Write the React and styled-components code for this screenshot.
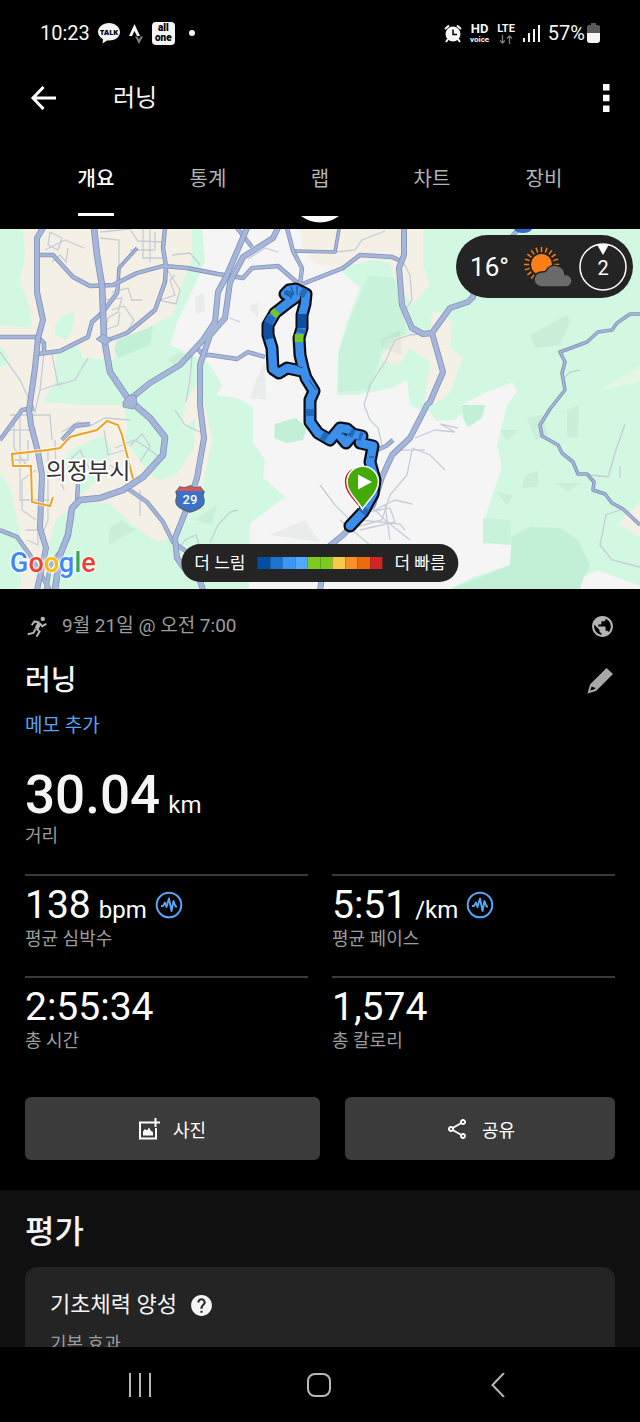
import React from "react";
import styled, { createGlobalStyle } from "styled-components";
import { MdHelp, MdOutlineShare, MdPublic } from "react-icons/md";

const GlobalStyle = createGlobalStyle`
  * {
    box-sizing: border-box;
  }

  body {
    margin: 0;
    background: #000000;
  }

  button {
    padding: 0;
    border: 0;
    background: none;
    color: inherit;
    font: inherit;
    cursor: pointer;
  }

  svg {
    display: block;
  }
`;

const Screen = styled.div`
  display: flex;
  flex-direction: column;
  height: 100vh;
  background: #000000;
  color: #f5f5f5;
  font-family: Roboto, "Noto Sans CJK KR", sans-serif;
  font-size: 18px;
`;

const StatusBar = styled.div`
  display: flex;
  flex: none;
  align-items: center;
  justify-content: space-between;
  height: 66px;
  padding: 0 40px;
  font-size: 20px;
`;

const StatusGroup = styled.div`
  display: flex;
  align-items: center;
  gap: 8px;
`;

const TightGroup = styled(StatusGroup)`
  gap: 2px;
`;

const Dot = styled.span`
  width: 6px;
  height: 6px;
  margin-left: 6px;
  border-radius: 50%;
  background: #f5f5f5;
`;

const AllOneBadge = styled.span`
  display: flex;
  flex-direction: column;
  align-items: center;
  justify-content: center;
  width: 23px;
  height: 23px;
  border-radius: 4px;
  background: #f5f5f5;
  color: #000000;
  font-family: Roboto, sans-serif;
  font-size: 10px;
  font-weight: 900;
  line-height: 10px;
`;

const CarrierTag = styled.span`
  display: flex;
  flex-direction: column;
  align-items: center;
  font-family: Roboto, sans-serif;
  font-size: ${({ $size }) => $size}px;
  font-weight: 700;
  line-height: 12px;

  small {
    font-size: 8px;
    line-height: 9px;
  }
`;

const AppBar = styled.header`
  display: flex;
  flex: none;
  align-items: center;
  height: 64px;
  padding: 0 30px;
`;

const AppTitle = styled.h1`
  flex: 1;
  margin: 0 0 0 56px;
  font-size: 24px;
  font-weight: 400;
  line-height: 32px;
`;

const TabList = styled.div`
  display: grid;
  flex: none;
  grid-template-columns: repeat(5, 1fr);
  height: 86px;
  padding: 0 40px;
`;

const Tab = styled.button`
  display: flex;
  align-items: flex-end;
  justify-content: center;
  color: ${({ $active }) => ($active ? "#ffffff" : "#b4b4b4")};
  font-size: 20px;
  font-weight: ${({ $active }) => ($active ? 500 : 400)};
  line-height: 28px;

  span {
    padding-bottom: 20px;
    border-bottom: 3px solid
      ${({ $active }) => ($active ? "#ffffff" : "transparent")};
  }
`;

const Content = styled.main`
  flex: 1;
  min-height: 0;
  overflow: hidden auto;
  scrollbar-width: none;
`;

const RefreshStrip = styled.div`
  display: flex;
  justify-content: center;
  height: 13px;
`;

const MapPanel = styled.section`
  position: relative;
  height: 360px;
  overflow: hidden;
  background: #d3f8e2;
`;

const MapSvg = styled.svg`
  width: 100%;
  height: 100%;
`;

const WeatherPill = styled.div`
  position: absolute;
  top: 6px;
  right: 7px;
  display: flex;
  align-items: center;
  gap: 6px;
  height: 63px;
  padding: 0 6px 0 14px;
  border-radius: 32px;
  background: #242424;
  color: #ffffff;
`;

const Temperature = styled.span`
  margin-right: 8px;
  font-size: 26px;
`;

const Legend = styled.div`
  position: absolute;
  bottom: 7px;
  left: 50%;
  display: flex;
  align-items: center;
  gap: 12px;
  height: 38px;
  padding: 0 13px;
  border-radius: 19px;
  background: #242424;
  color: #ffffff;
  font-size: 17px;
  line-height: 24px;
  white-space: nowrap;
  transform: translateX(-50%);
`;

const LegendScale = styled.div`
  display: grid;
  grid-template-columns: repeat(10, 1fr);
  width: 125px;
  height: 12px;
`;

const LegendCell = styled.span`
  background: ${({ $color }) => $color};
`;

const GoogleMark = styled.div`
  position: absolute;
  bottom: 10px;
  left: 10px;
  font-size: 27px;
  font-weight: 500;
  line-height: 32px;
  filter: drop-shadow(0 0 1px #ffffff) drop-shadow(0 0 1px #ffffff);
`;

const Letter = styled.span`
  color: ${({ $color }) => $color};
`;

const Details = styled.section`
  padding: 22px 25px 30px;
`;

const Row = styled.div`
  display: flex;
  align-items: center;
  justify-content: space-between;
`;

const ActivityDate = styled.div`
  display: flex;
  align-items: center;
  gap: 14px;
  color: #9c9c9c;
  font-size: 19px;
  line-height: 30px;
`;

const TitleRow = styled(Row)`
  margin-top: 20px;
`;

const ActivityName = styled.h2`
  margin: 0;
  font-size: 28px;
  font-weight: 500;
  line-height: 40px;
`;

const AddNote = styled.a`
  display: block;
  width: fit-content;
  margin-top: 12px;
  color: #57a5f5;
  font-size: 19px;
  line-height: 26px;
  text-decoration: none;
`;

const Distance = styled.div`
  margin-top: 26px;
  font-size: 53px;
  font-weight: 500;
  line-height: 60px;
`;

const Unit = styled.span`
  margin-left: 8px;
  font-size: 24px;
  font-weight: 400;
  line-height: 24px;
`;

const Label = styled.div`
  color: #9c9c9c;
  font-size: 18px;
  line-height: 22px;
`;

const StatGrid = styled.div`
  display: grid;
  grid-template-columns: 1fr 1fr;
  gap: 26px 24px;
  margin-top: 27px;
`;

const Stat = styled.div`
  padding-top: 6px;
  border-top: 2px solid #3a3a3a;
`;

const StatValue = styled.div`
  display: flex;
  align-items: center;
  gap: 8px;
  color: #ffffff;
  font-size: 39px;
  line-height: 46px;
`;

const Actions = styled.div`
  display: grid;
  grid-template-columns: 295fr 270fr;
  gap: 25px;
  margin-top: 45px;
`;

const ActionButton = styled.button`
  display: flex;
  align-items: center;
  justify-content: center;
  gap: 13px;
  height: 63px;
  border-radius: 6px;
  background: #3b3b3b;
  color: #ffffff;
  font-size: 18px;
`;

const Evaluation = styled.section`
  padding: 20px 25px 24px;
  background: #101010;
`;

const SectionTitle = styled.h2`
  margin: 0;
  font-size: 32px;
  font-weight: 500;
  line-height: 44px;
`;

const Card = styled.div`
  margin-top: 13px;
  padding: 24px 25px;
  border-radius: 12px;
  background: #242424;
`;

const CardTitle = styled.h3`
  display: flex;
  align-items: center;
  gap: 12px;
  margin: 0 0 14px;
  font-size: 22px;
  font-weight: 400;
  line-height: 28px;
`;

const NavBar = styled.nav`
  display: flex;
  flex: none;
  align-items: center;
  justify-content: space-around;
  height: 75px;
  padding: 0 52px 0 50px;
  color: #b8b8b8;
`;

const NavButton = styled.button`
  display: flex;
  align-items: center;
  justify-content: center;
  width: 48px;
  height: 48px;
`;

const tabs = ["개요", "통계", "랩", "차트", "장비"];

const legendColors = [
  "#034ea1",
  "#1b75d0",
  "#3b96f5",
  "#52a9ff",
  "#7ecb20",
  "#7ecb20",
  "#f8ca4a",
  "#fb8f2a",
  "#ed6a10",
  "#d32325",
];

const googleLetters = [
  ["G", "#4285f4"],
  ["o", "#ea4335"],
  ["o", "#fbbc05"],
  ["g", "#4285f4"],
  ["l", "#34a853"],
  ["e", "#ea4335"],
];

const stats = [
  { value: "138", unit: "bpm", label: "평균 심박수", graph: true },
  { value: "5:51", unit: "/km", label: "평균 페이스", graph: true },
  { value: "2:55:34", label: "총 시간" },
  { value: "1,574", label: "총 칼로리" },
];

// Map areas, back to front
const areas = [
  ["#f5f0e5", "23,229 25,255 20,280 30,308 32,328 0,325 0,472 10,488 20,532 23,552 20,589 43,589 50,540 56,520 78,502 110,504 133,525 157,542 173,538 200,500 212,440 200,380 186,400 180,450 160,480 150,475 125,440 132,405 83,405 43,402 55,382 57,350 78,345 83,358 113,360 117,352 152,325 173,315 182,285 192,258 192,229"],
  ["#d3f8e2", "63,315 75,312 73,328 67,340 55,335 55,326"],
  ["#d3f8e2", "70,450 104,435 112,450 105,475 80,495 76,480 62,468"],
  ["#d3f8e2", "124,405 186,405 168,432 150,450 128,433"],
  ["#d3f8e2", "152,472 168,440 196,418 194,448 176,475 160,480"],
  ["#d3f8e2", "0,345 8,355 6,365 0,368"],
  ["#c2f0d6", "117,340 153,326 150,345 118,358 114,350"],
  ["#f5f5f5", "202,229 205,260 195,285 178,320 170,345 195,356 208,362 222,385 217,395 237,398 253,407 253,442 265,460 263,477 285,497 250,523 249,589 450,589 473,577 510,565 512,545 483,543 485,518 502,467 497,445 507,405 517,392 513,382 487,392 457,407 425,412 410,405 407,380 392,388 357,395 337,395 338,352 347,322 360,288 342,272 343,229"],
  ["#f5f0e5", "300,229 423,229 423,265 430,285 412,305 393,275 390,262 370,260 343,268 314,264 302,248"],
  ["#f5f0e5", "380,358 397,335 430,332 432,313 446,311 452,328 450,348 463,358 450,392 436,404 425,400 430,362 410,348 398,366"],
  ["#c8f3da", "368,275 393,278 405,310 405,335 385,340 370,390 338,392 339,352 350,320"],
  ["#d3f8e2", "430,412 438,405 470,406 455,420 436,421"],
  ["#c2f0d6", "462,405 485,405 482,418 468,427 463,418"],
  ["#c2f0d6", "275,424 295,418 307,427 303,440 287,443 274,438"],
  ["#c2f0d6", "450,589 510,565 512,536 530,527 560,528 578,540 590,565 580,589"],
  ["#c8f3da", "483,518 510,520 512,545 483,543"],
  ["#f5f5f5", "580,589 584,577 597,570 640,586 640,589"],
  ["#f5f0e5", "618,524 640,502 640,537"],
  ["#e3f7e2", "622,377 640,366 640,382 600,390"],
];

const shades = [
  "530,335 567,315 570,322 560,345 535,348",
  "500,430 518,430 507,441",
  "527,418 543,415 548,435 535,440",
  "567,410 579,405 578,438 567,437",
  "525,475 538,471 538,487 522,488",
  "497,492 513,495 507,505",
  "556,483 580,483 568,492",
  "110,528 122,520 135,530 108,545",
  "195,520 217,505 212,525",
  "168,360 180,352 185,358 176,366",
  "250,305 258,303 258,317 250,310",
  "270,535 305,520 320,542",
  "257,378 265,360 266,400 250,398",
  "380,340 400,330 402,355 382,348",
  "195,298 204,292 205,310 196,315",
];

const minorStreets = [
  "50,232 62,238 58,250 48,245 50,232",
  "45,250 65,240 84,248",
  "52,262 60,255 66,262 68,248",
  "100,232 130,229 138,241 165,242",
  "119,268 119,240 100,238",
  "143,229 143,258 163,258",
  "130,250 155,250 155,232",
  "150,229 150,262",
  "105,300 122,298 118,312 108,318 105,330 118,325 120,312",
  "112,292 128,288 132,300 142,300",
  "112,310 124,306 134,320 128,330",
  "160,300 175,295 170,280 175,275",
  "165,266 180,290 176,304 158,300",
  "172,255 190,253 200,265",
  "44,352 40,390 35,412 20,380 0,352",
  "52,354 58,385 75,380 88,358",
  "40,390 62,383",
  "192,355 190,380 186,402",
  "10,415 50,415 52,440",
  "14,422 14,448 30,470",
  "20,410 20,500 50,500",
  "10,430 36,430",
  "28,440 28,460 10,460",
  "36,470 22,480 22,510 36,520",
  "48,450 48,520 40,540",
  "26,530 38,530 38,545 27,540",
  "55,440 56,470 64,490",
  "60,470 80,450 90,470 80,478",
  "62,432 78,422 92,425 105,418 130,420",
  "104,430 108,455 125,450",
  "115,448 135,440 150,450 160,458",
  "130,446 142,434 150,446 140,462",
  "110,465 130,480",
  "175,410 185,425 200,432",
  "177,552 185,540 196,535 200,548",
  "140,490 140,516",
  "248,259 265,248 278,252",
  "335,252 355,250 362,240 385,231",
  "430,333 410,335 395,340 385,362 370,385 364,405",
  "364,405 370,420 378,428 382,445",
  "403,262 410,275 412,300 405,310",
  "412,450 407,475 390,495 382,520 352,528",
  "412,448 430,455 445,470",
  "400,450 425,450",
  "415,438 435,430 455,432 440,424 458,428",
  "360,495 385,520 410,540",
  "360,520 400,524 405,530",
  "320,485 335,505 350,520",
  "375,510 395,500 412,504",
  "385,505 390,540",
  "352,515 390,508 395,522 360,530",
  "340,520 370,545",
  "210,542 218,525 230,512 238,510",
  "230,318 240,322",
  "623,509 606,515 600,545 612,560 640,567",
  "590,475 608,477 616,450 625,424",
  "562,380 570,372 580,370",
  "620,478 620,466",
];

const mainRoads = [
  "43,228 37,238 37,292 43,320 38,338 35,368 29,410 31,425 38,452 42,475 40,528 46,548 41,572 37,590",
  "129,400 150,383 180,365 203,340 215,322 218,292 227,275 247,228",
  "203,590 198,575 187,572 177,558 175,538 187,508 197,478 204,438 200,405 200,365 210,335 225,318 230,282 243,257 273,238 278,228",
  "404,228 404,255 399,268 402,305 412,328 423,334 432,333 443,372 430,402 427,405 410,438 392,455 382,477 373,505 343,535 327,548 320,590",
  "432,333 450,308 468,302 473,297 475,285",
];

const sideRoads = [
  "38,255 53,255 73,277 90,286 113,285 137,273 163,266 187,268 218,274 243,278 252,268 278,266 300,285 343,268 360,255 392,257 403,262",
  "165,228 163,248 166,266 165,282 155,310 137,325 127,333 108,340",
  "0,337 38,337 44,343 44,354",
  "38,354 60,351 88,337 92,322 103,312 117,293 118,285",
  "127,488 147,502 163,522 173,542 187,552",
  "0,440 22,410 34,408",
  "0,530 17,537 30,555 50,590",
  "60,552 50,566 46,590",
  "198,349 203,355 210,355 237,359 248,352 265,357",
  "287,228 293,251 302,268 300,284",
  "237,228 252,247",
  "62,440 75,426 90,424",
  "78,484 77,500",
  "377,450 386,446 393,440",
  "510,238 520,228",
];

const slimRoads = [
  "118,285 119,268 137,248",
  "293,251 335,252 339,229",
  "640,314 630,314 617,323 612,330 598,332 587,342 560,352 565,362 562,373 565,390 550,409 540,425 542,436 558,445 562,453 573,462 578,474 587,474 594,482 593,490 605,494 612,503 623,509 640,525",
];

const expressway =
  "94,228 97,255 102,285 104,338 110,372 129,400 150,418 165,437 163,455 143,477 123,490 100,498 80,500 72,508 68,535 60,555 55,590";

const cityBoundary =
  "133,479 122,435 118,425 107,421 97,430 70,437 60,448 48,450 12,454 13,466 31,466 32,502 50,506 53,497";

const track =
  "M288 296 L285 294 L289 290 L296 289 L306 294 L305 304 L302 315 L302 328 L299 338 L300 355 L303 368 L306 378 L314 391 L310 400 L310 422 L318 433 L330 440 L336 433 L340 428 L347 429 L353 434 L362 436 L360 443 L373 446 L370 462 L375 480 L373 494 L363 512 L350 526 M296 297 L289 302 L275 313 L268 325 L268 335 L272 348 L273 369 L279 373 L287 368 L301 371 M341 437 L346 443 L352 436";

const Roads = ({ lines, outer, inner }) => (
  <g fill="none" strokeLinejoin="round">
    {lines.map((points) => (
      <polyline
        key={points}
        points={points}
        stroke="#8292bc"
        strokeWidth={outer}
      />
    ))}
    {lines.map((points) => (
      <polyline
        key={points}
        points={points}
        stroke="#a6b6d8"
        strokeWidth={inner}
      />
    ))}
  </g>
);

const RouteMap = () => (
  <MapSvg
    viewBox="0 229 640 360"
    preserveAspectRatio="xMidYMid slice"
    role="img"
    aria-label="러닝 경로"
  >
    {areas.map(([fill, points]) => (
      <polygon key={points} points={points} fill={fill} />
    ))}
    {shades.map((points) => (
      <polygon key={points} points={points} fill="#50826a" opacity="0.07" />
    ))}
    <g fill="none" stroke="#c6cdd8" strokeWidth="1.3">
      {minorStreets.map((points) => (
        <polyline key={points} points={points} />
      ))}
    </g>
    <Roads lines={slimRoads} outer={3.6} inner={1.8} />
    <Roads lines={sideRoads} outer={4.4} inner={2.8} />
    <Roads lines={mainRoads} outer={6} inner={4.4} />
    <Roads lines={[expressway]} outer={6.6} inner={5} />
    <path
      d="M123 402 L129 395 L136 396 L137 404 L133 409 L123 407 Z M96 339 L103 334 L112 340 L105 345 Z"
      fill="#a6b6d8"
      stroke="#8292bc"
      strokeWidth="0.8"
    />
    <polyline
      points={cityBoundary}
      fill="none"
      stroke="#ffffff"
      strokeWidth="4"
      opacity="0.7"
    />
    <polyline
      points={cityBoundary}
      fill="none"
      stroke="#eda322"
      strokeWidth="2"
    />
    <path d="M514 229 h18 q-2 4 -9 4 q-7 0 -9 -4z" fill="#2f6bc6" />

    <path
      d="M180 487 q5 2 10 -1 q5 3 10 1 l4 5 q-2 3 0 8 q1 8 -14 12 q-15 -4 -14 -12 q2 -5 0 -8z"
      fill="#3a72c8"
      stroke="#5d6474"
      strokeWidth="1.5"
    />
    <path
      d="M180 487 q5 2 10 -1 q5 3 10 1 l3 4 h-26z"
      fill="#d8565b"
    />
    <text
      x="190"
      y="504"
      fill="#ffffff"
      fontSize="13"
      fontWeight="500"
      textAnchor="middle"
    >
      29
    </text>
    <text
      x="88"
      y="479"
      fill="#333338"
      fontSize="23"
      fontWeight="400"
      stroke="#ffffff"
      strokeWidth="4"
      strokeLinejoin="round"
      paintOrder="stroke"
      textAnchor="middle"
    >
      의정부시
    </text>

    <g fill="none" strokeLinecap="round" strokeLinejoin="round">
      <path d={track} stroke="#0a0d14" strokeWidth="13" />
      <path d={track} stroke="#3b8fea" strokeWidth="8.5" />
    </g>
    <g fill="none" strokeWidth="8.5">
      <path
        d="M302 314 L302 328 M268 322 L268 335 L269 339"
        stroke="#104f9f"
      />
      <path
        d="M288 296 L290 291 M301 291 L306 294 M272 316 L268 323 M302 329 L301 333 M310 409 L310 416 M322 435 L327 438 M350 432 L354 434 M359 436 L362 437 M366 508 L362 513"
        stroke="#2069bd"
      />
      <path d="M299 334 V342 M277 311 L273 315" stroke="#7ac721" />
    </g>
    <path
      d="M284 291 L292 299 M291 287 L294 295 M297 286 L297 295 M309 380 L316 390 M303 368 L297 366 M369 457 H374 M341 434 L350 434"
      fill="none"
      stroke="#174c86"
      strokeWidth="1"
    />

    <path
      d="M359 508 C352 499 344 492 344 482 A15.5 15.5 0 0 1 352 468"
      fill="#d9142f"
      stroke="#ffffff"
      strokeWidth="1.5"
    />
    <path
      d="M362.500 509 C357 500 347 492 347 482 A15.500 15.500 0 0 1 378.500 482 C378.500 492 368 500 362.500 509 Z"
      fill="#44ab05"
      stroke="#ffffff"
      strokeWidth="1.5"
    />
    <path d="M358 474.500 V489.500 L372 482 Z" fill="#ffffff" />
  </MapSvg>
);

const WeatherIcon = () => {
  const rays = Array.from({ length: 20 }, (_, i) => i * 18);
  return (
    <svg width="50" height="42" viewBox="0 0 50 42">
      <g stroke="#fb7f14" strokeWidth="1.5">
        {rays.map((angle) => (
          <line
            key={angle}
            x1="18.500"
            y1="1"
            x2="18.500"
            y2="6"
            transform={`rotate(${angle} 18.5 18.5)`}
          />
        ))}
      </g>
      <circle cx="18.500" cy="18.500" r="10.500" fill="#fb7f14" />
      <path
        d="M19 41 a7.500 7.500 0 0 1 -1 -15 q4 0 5 -1 a10 10 0 0 1 19 3.500 a6.200 6.200 0 0 1 1.500 12.500 z"
        fill="#6a6a6a"
        stroke="#242424"
        strokeWidth="1.500"
      />
    </svg>
  );
};

const WindIcon = () => (
  <svg width="48" height="48" viewBox="0 0 48 48">
    <circle
      cx="24"
      cy="24"
      r="23"
      fill="none"
      stroke="#ffffff"
      strokeWidth="1.500"
    />
    <path d="M18 1.500 h12 l-6 10.500 z" fill="#ffffff" />
    <text x="24" y="32" fill="#ffffff" fontSize="20" textAnchor="middle">
      2
    </text>
  </svg>
);

const TalkIcon = () => (
  <svg width="22" height="21" viewBox="0 0 22 21">
    <path
      d="M11 0 C17 0 22 4 22 9 C22 14 17 17.500 11 17.500 L9 17.400 L4.500 20.500 L5 16.200 C2 14.500 0 12 0 9 C0 4 5 0 11 0 Z"
      fill="#f5f5f5"
    />
    <text
      x="11"
      y="11.500"
      fill="#000000"
      fontFamily="Open Sans, sans-serif"
      fontSize="7"
      fontWeight="800"
      textAnchor="middle"
    >
      TALK
    </text>
  </svg>
);

const StravaIcon = () => (
  <svg width="16" height="21" viewBox="0 0 16 21">
    <path d="M1 13 L6.500 1 L12 13 H9 L6.500 8 L4 13 Z" fill="#f5f5f5" />
    <path d="M7 13.500 H9.500 L11 16.500 L12.500 13.500 H15 L11 21 Z" fill="#7c7c7c" />
  </svg>
);

const AlarmIcon = () => (
  <svg width="18" height="19" viewBox="0 0 18 19">
    <circle cx="9" cy="10" r="7.500" fill="#f5f5f5" />
    <path
      d="M1 5 L5 1.500 M17 5 L13 1.500 M4 15 L2 18 M14 15 L16 18"
      stroke="#f5f5f5"
      strokeWidth="2"
    />
    <path d="M9 5.500 V10.500 H13" fill="none" stroke="#000000" strokeWidth="1.500" />
  </svg>
);

const DataArrows = () => (
  <svg width="14" height="9" viewBox="0 0 14 9">
    <path
      d="M3.500 0 V8 M1 5.500 L3.500 8 L6 5.500 M10.500 9 V1 M8 3.500 L10.500 1 L13 3.500"
      fill="none"
      stroke="#7c7c7c"
      strokeWidth="1.300"
    />
  </svg>
);

const SignalIcon = () => (
  <svg width="17" height="18" viewBox="0 0 17 18">
    <path
      d="M1 14 V18 M6 9 V18 M11 5 V18 M16 1 V18"
      stroke="#f5f5f5"
      strokeWidth="2"
    />
  </svg>
);

const BatteryIcon = () => (
  <svg width="13" height="20" viewBox="0 0 13 20">
    <path d="M4 0 H9 V2 H11 Q13 2 13 4 V10 H0 V4 Q0 2 2 2 H4 Z" fill="#5a5a5a" />
    <path d="M0 10 H13 V17 Q13 20 10 20 H3 Q0 20 0 17 Z" fill="#f5f5f5" />
  </svg>
);

const BackIcon = () => (
  <svg width="27" height="24" viewBox="0 0 27 24">
    <path
      d="M13.500 1 L3 12 L13.500 23 M3 12 H26"
      fill="none"
      stroke="#ffffff"
      strokeWidth="3"
    />
  </svg>
);

const MoreIcon = () => (
  <svg width="7" height="28" viewBox="0 0 7 28">
    <path d="M0 0 h6.500 v6.500 h-6.500z M0 10.700 h6.500 v6.500 h-6.500z M0 21.500 h6.500 v6.500 h-6.500z" fill="#ffffff" />
  </svg>
);

const RunnerIcon = () => (
  <svg width="23" height="21" viewBox="78 76 68 62">
    <circle cx="130.500" cy="84.500" r="6.500" fill="#b4b4b4" />
    <g fill="none" stroke="#b4b4b4">
      <path d="M121 96 L112 114" strokeWidth="12" />
      <path
        d="M121 95 L106 92 L98 103 M122 99 L129 106 L141 99 M109 114 L103 126 L86 130 M113 114 L121 122 L112 137"
        strokeWidth="6"
      />
    </g>
  </svg>
);

const PencilIcon = () => (
  <svg width="28" height="26" viewBox="0 0 28 26">
    <path
      fillRule="evenodd"
      d="M19.500 0 L26 6 L9 23 L0.500 25.500 L3 16.500 Z M4.600 18.500 L3.300 22.500 L7.500 21.300 L8.500 20 Z"
      fill="#a8a8a8"
    />
  </svg>
);

const GraphIcon = () => (
  <svg width="28" height="28" viewBox="0 0 28 28">
    <g fill="none" stroke="#57a5f5">
      <circle cx="14" cy="14" r="12.300" strokeWidth="2" />
      <path
        d="M6 15 H8 L10 11.500 L11.500 16 L14 7.500 L16.500 20 L18.500 10 L20.500 15.500 H22"
        strokeWidth="1.900"
        strokeLinejoin="round"
      />
    </g>
  </svg>
);

const AddPhotoIcon = () => (
  <svg width="21" height="22" viewBox="0 0 21 22">
    <path
      d="M12 4.500 H1 V20.500 H17 V10"
      fill="none"
      stroke="#ffffff"
      strokeWidth="2"
    />
    <path d="M16.500 0 V9 M12 4.500 H21" stroke="#ffffff" strokeWidth="2" />
    <path d="M4 17.500 V13.500 L6 11 L8 12.500 L10 9.500 L12 13 L14 14 V17.500 Z" fill="#ffffff" />
  </svg>
);

const App = () => {
  return (
    <>
      <GlobalStyle />
      <Screen>
        <StatusBar>
          <StatusGroup>
            <span>10:23</span>
            <TalkIcon />
            <StravaIcon />
            <AllOneBadge>
              <span>all</span>
              <span>one</span>
            </AllOneBadge>
            <Dot />
          </StatusGroup>
          <StatusGroup>
            <AlarmIcon />
            <CarrierTag $size={13}>
              HD
              <small>voice</small>
            </CarrierTag>
            <CarrierTag $size={11}>
              LTE
              <DataArrows />
            </CarrierTag>
            <SignalIcon />
            <TightGroup>
              <span>57%</span>
              <BatteryIcon />
            </TightGroup>
          </StatusGroup>
        </StatusBar>

        <AppBar>
          <button type="button" aria-label="뒤로">
            <BackIcon />
          </button>
          <AppTitle>러닝</AppTitle>
          <button type="button" aria-label="더보기">
            <MoreIcon />
          </button>
        </AppBar>

        <TabList role="tablist">
          {tabs.map((tab, index) => (
            <Tab
              key={tab}
              type="button"
              role="tab"
              aria-selected={index === 0}
              $active={index === 0}
            >
              <span>{tab}</span>
            </Tab>
          ))}
        </TabList>

        <Content>
          <RefreshStrip>
            <svg width="38" height="7" viewBox="0 0 38 7">
              <path d="M0 0 H38 Q29 6.500 19 6.500 Q9 6.500 0 0 Z" fill="#ffffff" />
            </svg>
          </RefreshStrip>

          <MapPanel>
            <RouteMap />
            <WeatherPill>
              <Temperature>16°</Temperature>
              <WeatherIcon />
              <WindIcon />
            </WeatherPill>
            <GoogleMark>
              {googleLetters.map(([letter, color], index) => (
                <Letter key={index} $color={color}>
                  {letter}
                </Letter>
              ))}
            </GoogleMark>
            <Legend>
              <span>더 느림</span>
              <LegendScale>
                {legendColors.map((color, index) => (
                  <LegendCell key={index} $color={color} />
                ))}
              </LegendScale>
              <span>더 빠름</span>
            </Legend>
          </MapPanel>

          <Details>
            <Row>
              <ActivityDate>
                <RunnerIcon />
                <span>9월 21일 @ 오전 7:00</span>
              </ActivityDate>
              <MdPublic size={25} color="#b4b4b4" />
            </Row>
            <TitleRow>
              <ActivityName>러닝</ActivityName>
              <button type="button" aria-label="편집">
                <PencilIcon />
              </button>
            </TitleRow>
            <AddNote href="#note">메모 추가</AddNote>

            <Distance>
              30.04
              <Unit>km</Unit>
            </Distance>
            <Label>거리</Label>

            <StatGrid>
              {stats.map(({ value, unit, label, graph }) => (
                <Stat key={label}>
                  <StatValue>
                    <span>
                      {value}
                      {unit && <Unit>{unit}</Unit>}
                    </span>
                    {graph && <GraphIcon />}
                  </StatValue>
                  <Label>{label}</Label>
                </Stat>
              ))}
            </StatGrid>

            <Actions>
              <ActionButton type="button">
                <AddPhotoIcon />
                사진
              </ActionButton>
              <ActionButton type="button">
                <MdOutlineShare size={24} />
                공유
              </ActionButton>
            </Actions>
          </Details>

          <Evaluation>
            <SectionTitle>평가</SectionTitle>
            <Card>
              <CardTitle>
                기초체력 양성
                <MdHelp size={25} />
              </CardTitle>
              <Label>기본 효과</Label>
            </Card>
          </Evaluation>
        </Content>

        <NavBar>
          <NavButton type="button" aria-label="최근 앱">
            <svg width="24" height="24" viewBox="0 0 24 24">
              <path
                d="M2 0 V24 M12 0 V24 M22 0 V24"
                stroke="currentColor"
                strokeWidth="2"
              />
            </svg>
          </NavButton>
          <NavButton type="button" aria-label="홈">
            <svg width="24" height="24" viewBox="0 0 24 24">
              <rect
                x="1"
                y="1"
                width="22"
                height="22"
                rx="7"
                fill="none"
                stroke="currentColor"
                strokeWidth="2"
              />
            </svg>
          </NavButton>
          <NavButton type="button" aria-label="이전">
            <svg width="14" height="24" viewBox="0 0 14 24">
              <path
                d="M13 0 L1.500 12 L13 24"
                fill="none"
                stroke="currentColor"
                strokeWidth="2"
              />
            </svg>
          </NavButton>
        </NavBar>
      </Screen>
    </>
  );
};

export default App;
